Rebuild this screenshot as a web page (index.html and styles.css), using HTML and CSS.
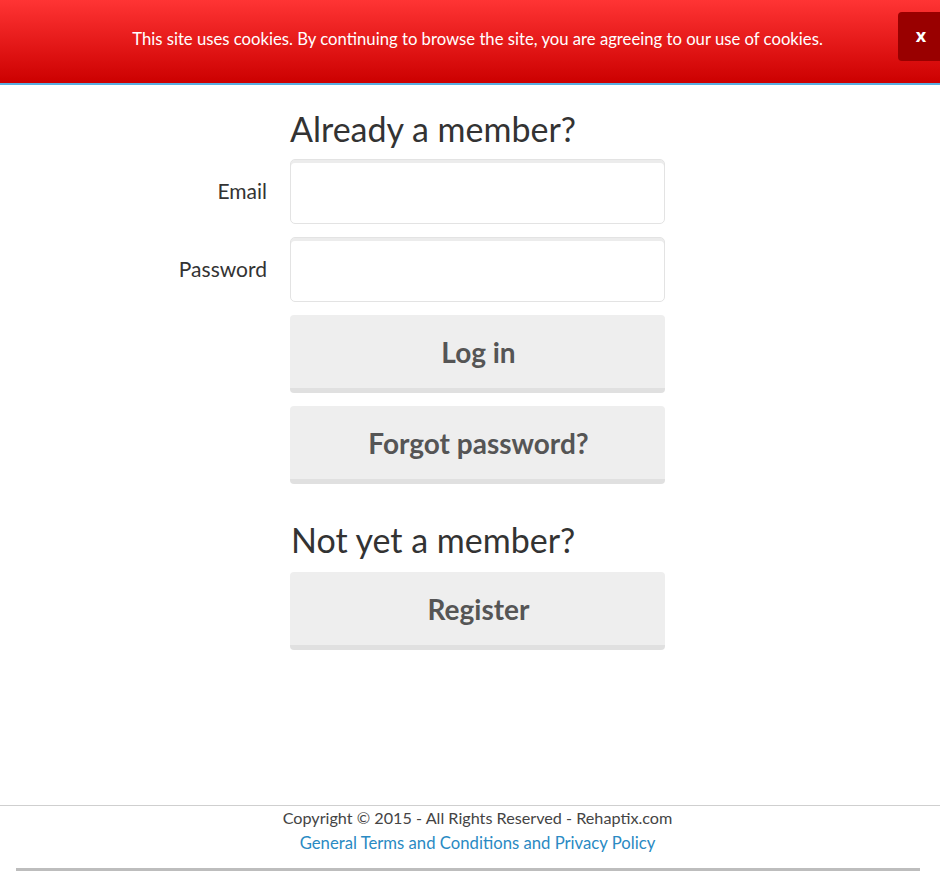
FILE: index.html
```html
<!DOCTYPE html>
<html lang="en">
<head>
<meta charset="utf-8">
<title>Login</title>
<link rel="stylesheet" href="styles.css">
</head>
<body>
<div class="cookie-bar">
  <p class="cookie-text">This site uses cookies. By continuing to browse the site, you are agreeing to our use of cookies.</p>
  <button class="cookie-close" type="button">x</button>
</div>

<main class="content">
  <form class="login-form">
    <div class="row">
      <div class="label-col"></div>
      <h2 class="section-title">Already a member?</h2>
    </div>
    <div class="row field-row">
      <label class="label-col" for="email">Email</label>
      <input class="text-input" id="email" type="email">
    </div>
    <div class="row field-row">
      <label class="label-col" for="password">Password</label>
      <input class="text-input" id="password" type="password">
    </div>
    <div class="row btn-row">
      <div class="label-col"></div>
      <button class="btn" type="button">Log in</button>
    </div>
    <div class="row btn-row">
      <div class="label-col"></div>
      <button class="btn" type="button">Forgot password?</button>
    </div>
    <div class="row second">
      <div class="label-col"></div>
      <h2 class="section-title">Not yet a member?</h2>
    </div>
    <div class="row btn-row">
      <div class="label-col"></div>
      <button class="btn" type="button">Register</button>
    </div>
  </form>
</main>

<footer class="footer">
  <p class="copyright">Copyright © 2015 - All Rights Reserved - Rehaptix.com</p>
  <a class="terms" href="#">General Terms and Conditions and Privacy Policy</a>
</footer>
<div class="hscroll"></div>
</body>
</html>
```

FILE: styles.css
```css
html, body {
  margin: 0;
  padding: 0;
  height: 100%;
  overflow: hidden;
}
body {
  font-family: Lato, "Liberation Sans", sans-serif;
  color: #333;
  background: #fff;
  display: flex;
  flex-direction: column;
}
.cookie-bar {
  height: 83px;
  background: linear-gradient(#ff3434, #cc0000);
  border-bottom: 2px solid #5aaee0;
  display: flex;
  align-items: flex-start;
  box-sizing: content-box;
  flex-shrink: 0;
}
.cookie-text {
  flex: 1;
  margin: 0;
  padding: 29px 0 0 57px;
  text-align: center;
  color: #fff;
  font-family: Lato, sans-serif;
  font-size: 16.7px;
  line-height: 20px;
}
.cookie-close {
  margin-top: 12px;
  width: 42px;
  height: 49px;
  border: none;
  border-radius: 4px 0 0 4px;
  background: #990000;
  color: #fff;
  font-family: "Open Sans", sans-serif;
  font-weight: 700;
  font-size: 18px;
  padding: 0 0 4px 4px;
}
.content {
  flex: 1;
}
.login-form {
  display: flex;
  flex-direction: column;
  padding-top: 24px;
}
.row {
  display: flex;
  gap: 23px;
  align-items: center;
}
.label-col {
  width: 267px;
  flex-shrink: 0;
  text-align: right;
  font-size: 21px;
  line-height: 24px;
  color: #333;
  margin-top: -2px;
}
.section-title {
  margin: 0 0 10px 0;
  font-weight: 400;
  font-size: 34px;
  line-height: 40px;
  color: #333;
}
.second {
  margin-top: 23px;
}
.second .section-title {
  margin-left: 1px;
  margin-bottom: 12px;
}
.field-row {
  margin-bottom: 13px;
}
.text-input {
  width: 375px;
  height: 65px;
  box-sizing: border-box;
  border: 1px solid #e3e3e3;
  border-radius: 5px;
  box-shadow: inset 0 3px 0 #ececec;
  padding: 6px 12px;
  font-size: 18px;
}
.btn-row {
  margin-bottom: 13px;
}
.btn {
  width: 375px;
  height: 78px;
  box-sizing: border-box;
  border: none;
  border-bottom: 5px solid #e0e0e0;
  border-radius: 4px;
  background: #eeeeee;
  color: #555;
  font-family: Lato, sans-serif;
  font-weight: 700;
  font-size: 28px;
  padding: 0 0 0 2px;
}
.footer {
  border-top: 1px solid #cfcfcf;
  text-align: center;
  padding: 1px 0 14px 15px;
  flex-shrink: 0;
}
.copyright {
  margin: 0;
  font-size: 16.2px;
  line-height: 22px;
  color: #444;
}
.terms {
  display: inline-block;
  margin-top: 3px;
  font-size: 16.7px;
  line-height: 22px;
  color: #2a8ac3;
  text-decoration: none;
}
.hscroll {
  height: 3px;
  margin: 0 20px 0 16px;
  background: #bdbdbd;
  flex-shrink: 0;
}
```
